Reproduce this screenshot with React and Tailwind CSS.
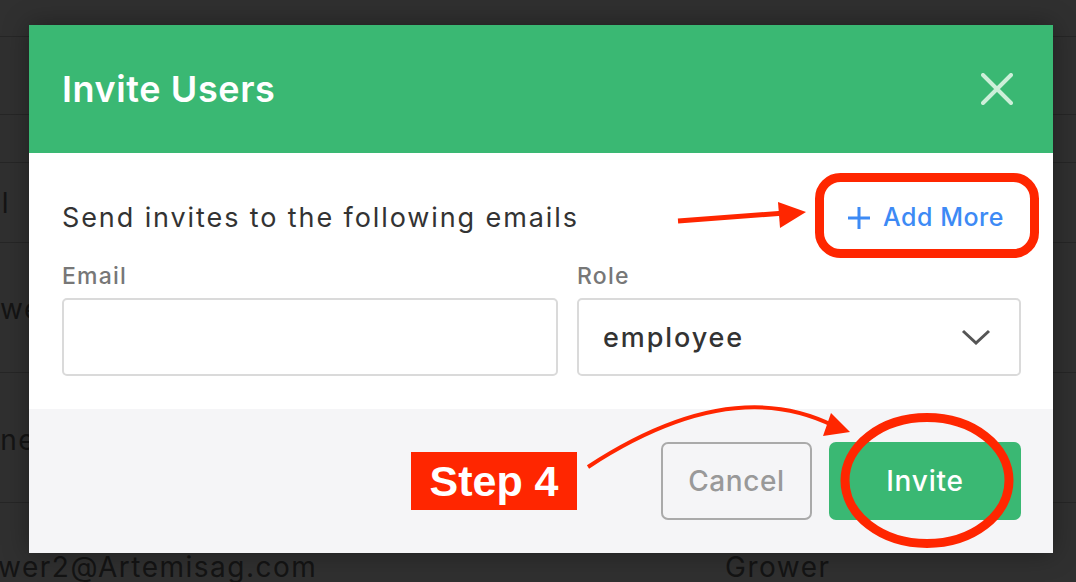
import React from "react";

const F = { fontFamily: "Inter, 'Noto Sans', sans-serif" };

function BgRow({ h, children, last }) {
  return (
    <div className={`flex items-center ${last ? "" : "border-b border-[#262626]"}`} style={{ height: h }}>
      {children}
    </div>
  );
}

export default function App() {
  return (
    <div className="relative h-[582px] w-[1076px] overflow-hidden bg-[#303030]" style={F}>
      {/* background table */}
      <div className="flex flex-col text-[28px] tracking-[1.5px] text-[#141414]">
        <BgRow h={37} />
        <BgRow h={78} />
        <BgRow h={48} />
        <BgRow h={80}>
          <span className="-ml-[68px] whitespace-nowrap">Email</span>
        </BgRow>
        <BgRow h={130}>
          <span className="-ml-[48px] mt-[2px] whitespace-nowrap">grower@Artemisag.com</span>
        </BgRow>
        <BgRow h={130}>
          <span className="-ml-[42px] mt-[4px] whitespace-nowrap">owner@Artemisag.com</span>
        </BgRow>
        <div className="flex h-[79px] items-end pb-[1px] leading-[28px]">
          <span className="-ml-[50px] w-[775px] whitespace-nowrap">grower2@Artemisag.com</span>
          <span className="whitespace-nowrap">Grower</span>
        </div>
      </div>

      {/* modal */}
      <div className="absolute left-[29px] top-[25px] w-[1024px] shadow-[0_0_24px_rgba(0,0,0,0.35)]">
        <div className="flex h-[128px] items-center justify-between bg-[#3ab873] pl-[33px] pr-[40px]">
          <h1 className="text-[36px] font-semibold tracking-[0.6px] text-white">Invite Users</h1>
          <svg width="32" height="32" viewBox="0 0 32 32" className="mt-[-1px]">
            <path d="M2 2 L30 30 M30 2 L2 30" stroke="#cdefd9" strokeWidth="4" strokeLinecap="round" />
          </svg>
        </div>
        <div className="bg-white pb-[33px] pl-[33px] pr-[32px] pt-[41px]">
          <div className="flex h-[48px] items-center justify-between">
            <p className="text-[27px] tracking-[1.9px] text-[#333]">Send invites to the following emails</p>
            <button className="mr-[17px] flex items-center gap-[12px] text-[25px] font-medium tracking-[0.5px] text-[#3d8af5]">
              <svg width="24" height="24" viewBox="0 0 24 24">
                <path d="M12 1 V23 M1 12 H23" stroke="#3d8af5" strokeWidth="3" />
              </svg>
              Add More
            </button>
          </div>
          <div className="mt-[18px] flex gap-[19px]">
            <div className="w-[496px]">
              <label className="block h-[32px] text-[23px] font-medium leading-[32px] tracking-[1.2px] text-[#777]">Email</label>
              <div className="mt-[6px] h-[78px] rounded-[5px] border-2 border-[#dadada]" />
            </div>
            <div className="flex-1">
              <label className="block h-[32px] text-[23px] font-medium leading-[32px] tracking-[1.2px] text-[#777]">Role</label>
              <div className="mt-[6px] flex h-[78px] items-center justify-between rounded-[5px] border-2 border-[#dadada] pl-[24px] pr-[28px]">
                <span className="mt-[3px] text-[27px] font-medium tracking-[1.9px] text-[#333]">employee</span>
                <svg width="30" height="16" viewBox="0 0 30 16">
                  <path d="M2 2 L15 14 L28 2" fill="none" stroke="#555" strokeWidth="3" />
                </svg>
              </div>
            </div>
          </div>
        </div>
        <div className="flex h-[144px] items-center justify-end gap-[17px] bg-[#f5f5f7] pr-[32px]">
          <button className="h-[78px] w-[151px] rounded-[7px] border-2 border-[#aaaaaa] text-[28px] font-medium tracking-[0.6px] text-[#999]">
            Cancel
          </button>
          <button className="h-[78px] w-[192px] rounded-[7px] bg-[#3ab873] text-[28px] font-medium tracking-[0.8px] text-white">
            Invite
          </button>
        </div>
      </div>

      {/* annotations */}
      <svg className="pointer-events-none absolute left-0 top-0" width="1076" height="582">
        <line x1="678" y1="221" x2="785" y2="213" stroke="#ff2600" strokeWidth="5" />
        <polygon points="778,202 806,212 780,228" fill="#ff2600" />
        <rect x="819.5" y="177.5" width="215" height="76" rx="21" fill="none" stroke="#ff2600" strokeWidth="9" />
        <path d="M588 467 Q 730 374 834 426" fill="none" stroke="#ff2600" strokeWidth="4" />
        <polygon points="823,436 831,413 850,432" fill="#ff2600" />
        <ellipse cx="927" cy="480.5" rx="82" ry="63" fill="none" stroke="#ff2600" strokeWidth="9" />
      </svg>
      <div
        className="absolute left-[411px] top-[452px] flex h-[58px] w-[166px] items-center justify-center bg-[#ff2600] text-[43px] font-bold text-white"
        style={{ fontFamily: "'Liberation Sans', Arial, sans-serif" }}
      >
        Step 4
      </div>
    </div>
  );
}
